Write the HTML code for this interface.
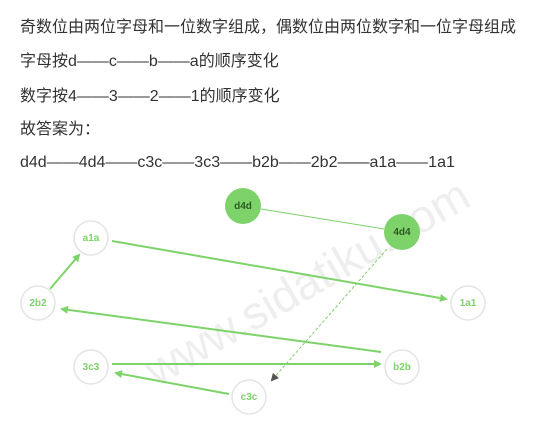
<!DOCTYPE html>
<html><head><meta charset="utf-8"><style>
body{margin:0;width:542px;height:432px;background:#fff;overflow:hidden;position:relative}
.t{position:absolute;left:20px;font:16px "Liberation Sans","Noto Sans CJK SC",sans-serif;color:#333;white-space:nowrap;line-height:20px}
svg{position:absolute;left:0;top:0}
</style></head><body>
<div class="t" style="top:18px">奇数位由两位字母和一位数字组成，偶数位由两位数字和一位字母组成</div>
<div class="t" style="top:52px">字母按d——c——b——a的顺序变化</div>
<div class="t" style="top:87px">数字按4——3——2——1的顺序变化</div>
<div class="t" style="top:120px">故答案为：</div>
<div class="t" style="top:153px">d4d——4d4——c3c——3c3——b2b——2b2——a1a——1a1</div>
<svg width="542" height="432" font-family="Liberation Sans,sans-serif" font-size="10" font-weight="bold" text-anchor="middle">
<defs><marker id="a" markerWidth="8" markerHeight="8" refX="6" refY="4" orient="auto" markerUnits="userSpaceOnUse"><path d="M0,0L8,4L0,8z" fill="#7ed26a"/></marker>
<marker id="b" markerWidth="8" markerHeight="8" refX="6" refY="4" orient="auto" markerUnits="userSpaceOnUse"><path d="M0,0L8,4L0,8z" fill="#555"/></marker></defs>
<text x="300" y="300" transform="rotate(-30 300 270)" font-size="46" font-weight="normal" fill="#eee">www.sidatiku.com</text>
<g fill="#fff" stroke="#e4e4e4" stroke-width="1.5">
<circle cx="91" cy="238" r="17"/><circle cx="38" cy="303" r="17"/><circle cx="468" cy="303" r="17"/>
<circle cx="91" cy="367" r="17"/><circle cx="402" cy="367" r="17"/><circle cx="249" cy="397" r="17"/></g>
<circle cx="243" cy="206" r="18" fill="#7ed26a"/><circle cx="402" cy="232" r="18" fill="#7ed26a"/>
<g stroke="#7ed26a" stroke-width="2" fill="none">
<line x1="261" y1="209" x2="384" y2="229" stroke-width="1"/>
<line x1="112" y1="241" x2="446" y2="299" marker-end="url(#a)"/>
<line x1="50" y1="289" x2="79" y2="255" marker-end="url(#a)"/>
<line x1="381" y1="352" x2="62" y2="309" marker-end="url(#a)"/>
<line x1="112" y1="364" x2="380" y2="364" marker-end="url(#a)"/>
<line x1="229" y1="394" x2="116" y2="373" marker-end="url(#a)"/>
<line x1="387" y1="249" x2="272" y2="380" stroke-width="1" stroke-dasharray="3,2" marker-end="url(#b)"/>
</g>
<g fill="#7ed26a"><text x="91" y="241">a1a</text><text x="38" y="306">2b2</text><text x="468" y="306">1a1</text>
<text x="91" y="370">3c3</text><text x="402" y="370">b2b</text><text x="249" y="400">c3c</text></g>
<g fill="#2a5a22"><text x="243" y="209">d4d</text><text x="402" y="235">4d4</text></g>
</svg>
</body></html>
